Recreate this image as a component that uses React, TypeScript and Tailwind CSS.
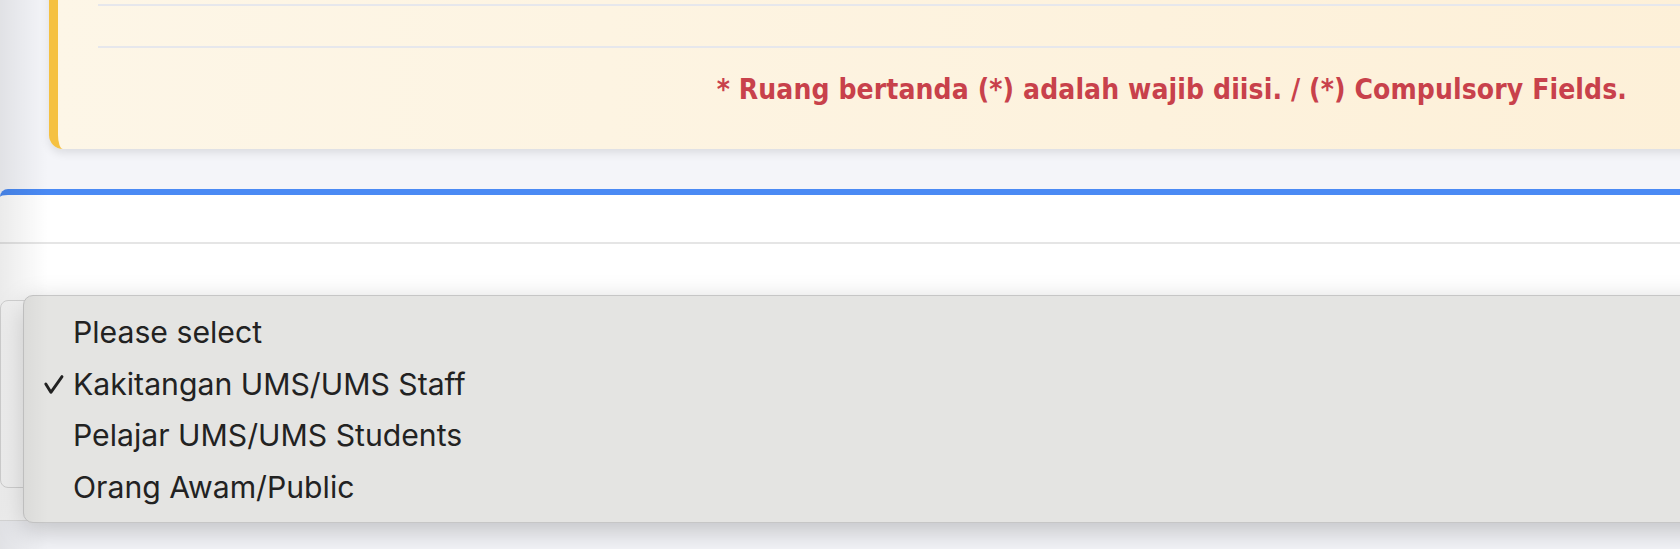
const options = [
    { label: 'Please select', selected: false },
    { label: 'Kakitangan UMS/UMS Staff', selected: true },
    { label: 'Pelajar UMS/UMS Students', selected: false },
    { label: 'Orang Awam/Public', selected: false },
];

function NoticeCard() {
    return (
        <div className="-mt-6 ml-[49px] -mr-6 rounded-[14px] border-l-[9px] border-[#f5c142] bg-gradient-to-r from-[#fdf6e7] to-[#fdf0d8] pt-[28px] pb-[43px] pl-[40px] shadow-[0_4px_10px_rgba(0,0,0,0.10)]">
            <div className="h-[2px] bg-[#e6e7ec]" />
            <div className="mt-[40px] h-[2px] bg-[#e6e7ec]" />
            <p className="mt-[26px] pr-[77px] text-right font-['DejaVu_Sans',sans-serif] text-[28px] leading-[32px] font-bold tracking-[0.1px] text-[#c8414b] font-stretch-condensed">
                * Ruang bertanda (*) adalah wajib diisi. / (*) Compulsory Fields.
            </p>
        </div>
    );
}

function CheckMark() {
    return (
        <svg viewBox="0 0 22 22" className="h-[22px] w-[22px]" fill="none" stroke="currentColor" strokeWidth={2.9} strokeLinecap="round" strokeLinejoin="round">
            <polyline points="2.8,11 7.9,19.3 19,3.6" />
        </svg>
    );
}

function CategoryDropdown() {
    return (
        <div className="absolute left-[23px] top-[295px] w-[1700px] h-[228px] rounded-[10px] border border-[#c6c6c6] bg-[#e4e4e2] pt-[11px] shadow-[0_8px_28px_rgba(0,0,0,0.22)] font-['Inter',sans-serif] text-[30.2px] text-[#222222]">
            {options.map((opt) => (
                <div key={opt.label} className="flex h-[51.5px] items-center">
                    <span className="ml-[19px] flex w-[22px]">
                        {opt.selected && <CheckMark />}
                    </span>
                    <span className="ml-[8px] leading-[51.5px]">{opt.label}</span>
                </div>
            ))}
        </div>
    );
}

export default function App() {
    return (
        <div className="relative h-[549px] overflow-hidden bg-[#f4f5f9]">
            <NoticeCard />

            <div className="mt-[40px] -mr-6 rounded-t-[8px] border-t-[6px] border-[#4a8af4] bg-white">
                <div className="h-[49px] border-b-2 border-[#e5e5e5]" />
                <div className="border-b border-[#e4e4e4] pt-[56px] pb-[32px]">
                    <div className="h-[188px] rounded-[8px] border border-[#dcdcdc] bg-white" />
                </div>
            </div>

            <CategoryDropdown />

            <div className="pointer-events-none absolute inset-y-0 left-0 w-[48px] bg-gradient-to-r from-black/[0.08] to-transparent" />
        </div>
    );
}
